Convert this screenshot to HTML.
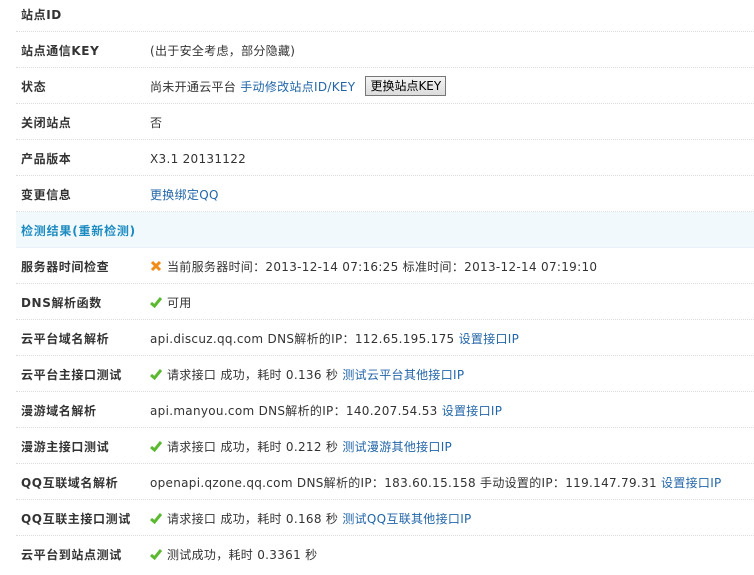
<!DOCTYPE html>
<html><head><meta charset="utf-8"><style>
body{margin:0;background:#fff;font-family:"DejaVu Sans","Noto Sans CJK SC",sans-serif;font-size:12px;color:#333;overflow:hidden;width:754px;height:570px}
.wrap{position:absolute;left:16px;top:-4px;width:738px}
.r{height:36px;box-sizing:border-box;border-bottom:1px dotted #dcdcdc;position:relative;line-height:39px}
.r:last-child{border-bottom:none}
.l{position:absolute;left:5px;top:0;font-weight:bold;letter-spacing:0.6px}
.v{position:absolute;left:134px;top:0;white-space:nowrap;letter-spacing:0.3px}
a{color:#2366a8;text-decoration:none}
.h{background:#f2f9fd;color:#1b8bc0;font-weight:bold;padding-left:5px;border-bottom:1px solid #e8f2f8;letter-spacing:0.8px}
.btn{display:inline-block;height:18px;line-height:18px;border:1px solid #777;background:linear-gradient(#f4f4f4,#dcdcdc);color:#000;padding:0 4px;margin-left:10px;vertical-align:middle;position:relative;top:-2px;letter-spacing:0}
.ic{display:inline-block;width:12px;height:12px;vertical-align:middle;margin-right:5px;position:relative;top:-2px}
</style></head><body><div class="wrap">
<div class="r"><span class="l">站点ID</span></div>
<div class="r"><span class="l">站点通信KEY</span><span class="v">(出于安全考虑，部分隐藏)</span></div>
<div class="r"><span class="l">状态</span><span class="v">尚未开通云平台 <a>手动修改站点ID/KEY</a><span class="btn">更换站点KEY</span></span></div>
<div class="r"><span class="l">关闭站点</span><span class="v">否</span></div>
<div class="r"><span class="l">产品版本</span><span class="v">X3.1 20131122</span></div>
<div class="r"><span class="l">变更信息</span><span class="v"><a>更换绑定QQ</a></span></div>
<div class="r h">检测结果(重新检测)</div>
<div class="r"><span class="l">服务器时间检查</span><span class="v"><svg class="ic" viewBox="0 0 12 12"><path d="M2 2L10 10M10 2L2 10" stroke="#f38b17" stroke-width="3"/></svg>当前服务器时间：2013-12-14 07:16:25 标准时间：2013-12-14 07:19:10</span></div>
<div class="r"><span class="l">DNS解析函数</span><span class="v"><svg class="ic" viewBox="0 0 12 12"><path d="M1 7L4.5 10L11 2" stroke="#5cb82f" stroke-width="3" fill="none"/></svg>可用</span></div>
<div class="r"><span class="l">云平台域名解析</span><span class="v">api.discuz.qq.com DNS解析的IP：112.65.195.175 <a>设置接口IP</a></span></div>
<div class="r"><span class="l">云平台主接口测试</span><span class="v"><svg class="ic" viewBox="0 0 12 12"><path d="M1 7L4.5 10L11 2" stroke="#5cb82f" stroke-width="3" fill="none"/></svg>请求接口 成功，耗时 0.136 秒 <a>测试云平台其他接口IP</a></span></div>
<div class="r"><span class="l">漫游域名解析</span><span class="v">api.manyou.com DNS解析的IP：140.207.54.53 <a>设置接口IP</a></span></div>
<div class="r"><span class="l">漫游主接口测试</span><span class="v"><svg class="ic" viewBox="0 0 12 12"><path d="M1 7L4.5 10L11 2" stroke="#5cb82f" stroke-width="3" fill="none"/></svg>请求接口 成功，耗时 0.212 秒 <a>测试漫游其他接口IP</a></span></div>
<div class="r"><span class="l">QQ互联域名解析</span><span class="v">openapi.qzone.qq.com DNS解析的IP：183.60.15.158 手动设置的IP：119.147.79.31 <a>设置接口IP</a></span></div>
<div class="r"><span class="l">QQ互联主接口测试</span><span class="v"><svg class="ic" viewBox="0 0 12 12"><path d="M1 7L4.5 10L11 2" stroke="#5cb82f" stroke-width="3" fill="none"/></svg>请求接口 成功，耗时 0.168 秒 <a>测试QQ互联其他接口IP</a></span></div>
<div class="r"><span class="l">云平台到站点测试</span><span class="v"><svg class="ic" viewBox="0 0 12 12"><path d="M1 7L4.5 10L11 2" stroke="#5cb82f" stroke-width="3" fill="none"/></svg>测试成功，耗时 0.3361 秒</span></div>
</div></body></html>
